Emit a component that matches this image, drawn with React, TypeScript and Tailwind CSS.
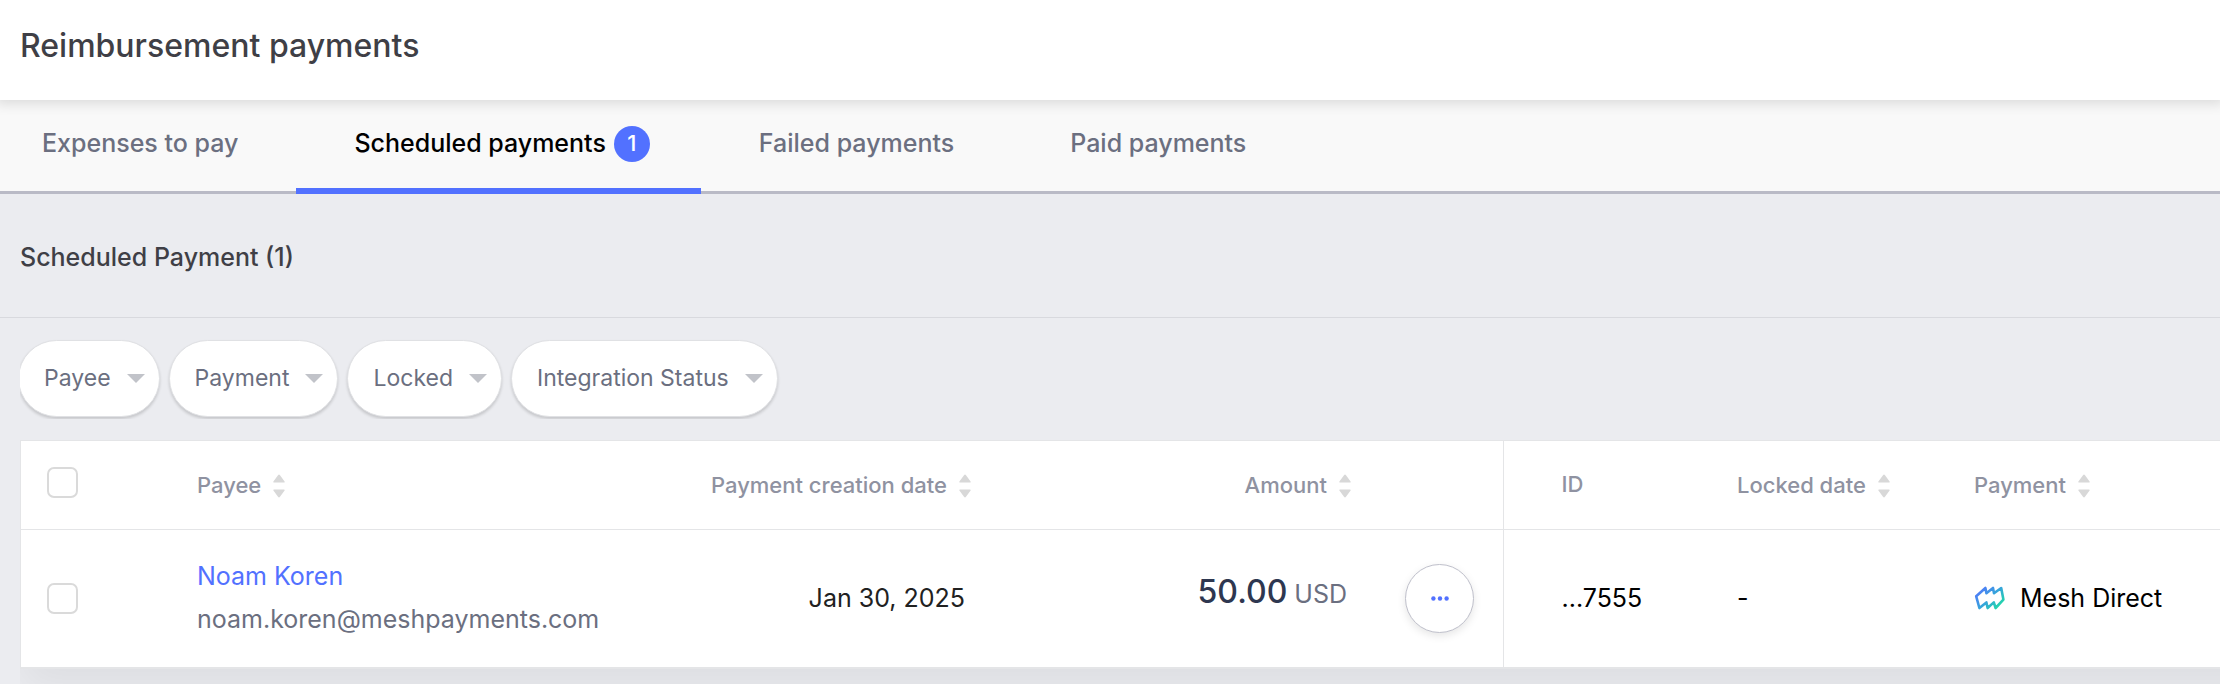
import type { ReactNode } from "react";

const tabs = [
  { label: "Expenses to pay", active: false, pad: "pl-[42px] pr-[58px]" },
  { label: "Scheduled payments", active: true, count: 1, pad: "pl-[58px] pr-[51px]" },
  { label: "Failed payments", active: false, pad: "px-[58px]" },
  { label: "Paid payments", active: false, pad: "px-[58px]" },
];

const filters = ["Payee", "Payment", "Locked", "Integration Status"];

function SortIcon() {
  return (
    <svg width="12" height="24" viewBox="0 0 12 24" fill="#d8d8d8" aria-hidden="true">
      <path d="M5 1.2Q6-.4 7 1.2L11.6 7.4Q12 8.6 11 8.6H1Q0 8.6.4 7.4Z" />
      <path d="M5 22.8Q6 24.4 7 22.8L11.6 16.6Q12 15.4 11 15.4H1Q0 15.4.4 16.6Z" />
    </svg>
  );
}

function SortButton({ children }: { children: ReactNode }) {
  return (
    <button type="button" className="inline-flex items-center gap-3 align-middle">
      {children}
      <SortIcon />
    </button>
  );
}

function MeshLogo() {
  return (
    <svg width="32" height="24" viewBox="0 0 32 24" fill="none" aria-hidden="true">
      <defs>
        <linearGradient id="mesh" x1="5" y1="2" x2="25" y2="23" gradientUnits="userSpaceOnUse">
          <stop stopColor="#5277fb" />
          <stop offset="0.5" stopColor="#37a3dc" />
          <stop offset="1" stopColor="#20dca6" />
        </linearGradient>
      </defs>
      <path
        d="M2.2 10.3 11.4 2 12.4 7.2 19 2 20 7.2 27.2 2 29.4 13.6 21.6 22 19.8 16.4 13.6 22 12.4 16.4 5.4 22Z"
        stroke="url(#mesh)"
        strokeWidth="2.6"
        strokeLinejoin="round"
      />
    </svg>
  );
}

function Checkbox({ label }: { label: string }) {
  return (
    <input
      type="checkbox"
      aria-label={label}
      className="block size-[31px] appearance-none rounded-[7px] border-2 border-[#dadada] bg-white checked:bg-[#5271ff]"
    />
  );
}

export default function App() {
  return (
    <div className="min-h-screen overflow-hidden bg-[#ebecf0] font-['Inter',sans-serif] text-[25px] text-black">
      <header className="relative z-10 flex h-[100px] items-center bg-white px-5 pb-2 shadow-[0_0_12px_4px_rgba(0,0,0,0.12)]">
        <h1 className="text-[32px] leading-10 font-medium text-[#3f3f46]">Reimbursement payments</h1>
      </header>

      <nav className="flex h-[94px] border-b-[3px] border-[#b9bac6] bg-[#f9f9f9]">
        {tabs.map((t) => (
          <a
            key={t.label}
            href="#"
            aria-current={t.active ? "page" : undefined}
            className={`-mb-[3px] flex items-center gap-2 border-b-[6px] pb-px font-medium whitespace-nowrap ${t.pad} ${
              t.active ? "border-[#5271ff] text-black" : "border-transparent text-[#6b6f80]"
            }`}
          >
            {t.label}
            {t.count && (
              <span className="flex size-9 items-center justify-center rounded-full bg-[#5271ff] text-[22px] text-white">
                {t.count}
              </span>
            )}
          </a>
        ))}
      </nav>

      <main>
        <div className="flex h-[124px] items-center border-b border-[#d8d9de] px-5 pt-1">
          <h2 className="font-medium text-[#3f3f46]">Scheduled Payment (1)</h2>
        </div>

        <div className="mb-[21px] ml-5 overflow-hidden pt-[22px] pb-0.5">
          <div className="-ml-0.5 flex gap-[9px]">
            {filters.map((f) => (
              <button
                key={f}
                type="button"
                className="flex h-[77px] items-center gap-4 rounded-full border border-[#e0e1e4] bg-white pr-[14px] pl-[25px] text-[23px] whitespace-nowrap text-[#6b6f80] shadow-[0_2px_3px_rgba(0,0,0,0.16)]"
              >
                {f}
                <svg width="18" height="9" viewBox="0 0 18 9" fill="#c1c3c9" aria-hidden="true">
                  <path d="M0 0H18L9 9Z" />
                </svg>
              </button>
            ))}
          </div>
        </div>

        <div className="ml-5 overflow-hidden pb-[15px]">
          <div className="-mr-16 border-t border-b-2 border-l border-[#e4e5e7] bg-white shadow-[0_20px_40px_rgba(0,0,0,0.06)]">
            <table className="w-full table-fixed border-collapse text-left">
              <colgroup>
                <col className="w-[176px]" />
                <col className="w-[472px]" />
                <col className="w-[302px]" />
                <col className="w-[380px]" />
                <col className="w-[152px]" />
                <col className="w-[234px]" />
                <col className="w-[237px]" />
                <col />
              </colgroup>
              <thead>
                <tr className="h-[88px] border-b border-[#e4e5e7] text-[22px] text-[#8f92a1] [&>th]:py-0 [&>th]:font-medium">
                  <th>
                    <div className="pb-1 pl-[26px]">
                      <Checkbox label="Select all payments" />
                    </div>
                  </th>
                  <th>
                    <SortButton>Payee</SortButton>
                  </th>
                  <th className="text-right">
                    <SortButton>Payment creation date</SortButton>
                  </th>
                  <th className="text-right">
                    <SortButton>Amount</SortButton>
                  </th>
                  <th className="border-r border-[#e4e5e7]" aria-label="Actions" />
                  <th className="pl-[58px]">ID</th>
                  <th>
                    <SortButton>Locked date</SortButton>
                  </th>
                  <th>
                    <SortButton>Payment</SortButton>
                  </th>
                </tr>
              </thead>
              <tbody>
                <tr className="h-[138px]">
                  <td className="pl-[26px]">
                    <Checkbox label="Select payment to Noam Koren" />
                  </td>
                  <td className="leading-[43px]">
                    <a href="#" className="block text-[#5271ff]">
                      Noam Koren
                    </a>
                    <span className="block text-[#6b6f80]">noam.koren@meshpayments.com</span>
                  </td>
                  <td className="pr-1.5 text-right text-[#212121]">Jan 30, 2025</td>
                  <td className="pr-1 pb-3 text-right text-[#6b6f80]">
                    <span className="text-[32px] font-medium text-[#2e3750]">50.00</span> USD
                  </td>
                  <td className="border-r border-[#e4e5e7]">
                    <button
                      type="button"
                      aria-label="More actions"
                      className="ml-[54px] flex size-[69px] items-center justify-center rounded-full border border-[#bfc0cb] bg-white shadow-[0_3px_8px_rgba(0,0,0,0.1)]"
                    >
                      <svg width="18" height="5" viewBox="0 0 18 5" fill="#5271ff" aria-hidden="true">
                        <circle cx="2.4" cy="2.5" r="2.2" />
                        <circle cx="9" cy="2.5" r="2.2" />
                        <circle cx="15.6" cy="2.5" r="2.2" />
                      </svg>
                    </button>
                  </td>
                  <td className="pl-[58px]">...7555</td>
                  <td>-</td>
                  <td>
                    <span className="flex items-center gap-[14px]">
                      <MeshLogo />
                      Mesh Direct
                    </span>
                  </td>
                </tr>
              </tbody>
            </table>
          </div>
        </div>
      </main>
    </div>
  );
}
